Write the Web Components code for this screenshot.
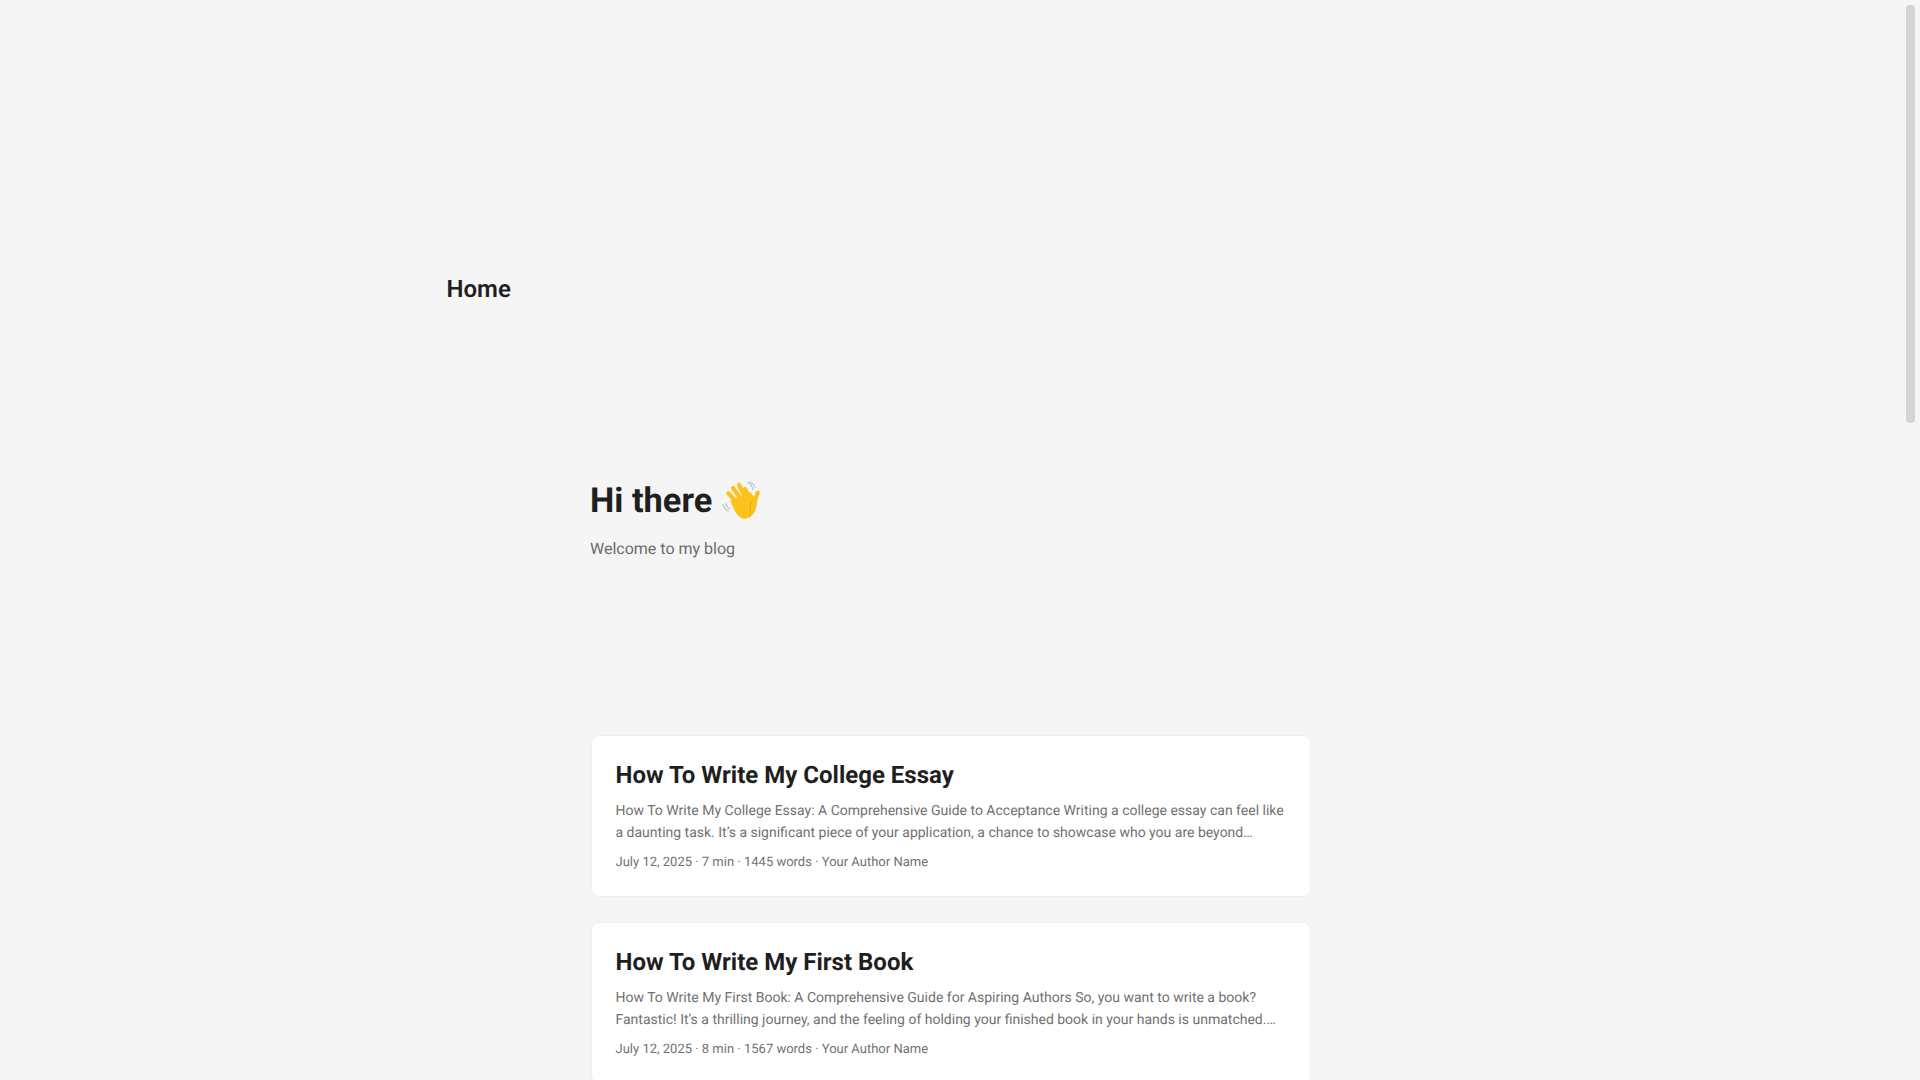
<!DOCTYPE html>
<html lang="en">
<head>
<meta charset="utf-8">
<title>Home</title>
<style>
  html, body { margin: 0; height: 1080px; overflow: hidden; background: #f5f5f5; }
  body { font-family: Roboto, "Liberation Sans", sans-serif; color: #1f1f1f; text-rendering: geometricPrecision; }
</style>
</head>
<body>
<blog-page>
  <site-header></site-header>
  <blog-hero title-text="Hi there" subtitle="Welcome to my blog"></blog-hero>
  <post-list>
    <post-card title="How To Write My College Essay" meta="July 12, 2025 · 7 min · 1445 words · Your Author Name">How To Write My College Essay: A Comprehensive Guide to Acceptance Writing a college essay can feel like a daunting task. It’s a significant piece of your application, a chance to showcase who you are beyond…</post-card>
    <post-card title="How To Write My First Book" meta="July 12, 2025 · 8 min · 1567 words · Your Author Name">How To Write My First Book: A Comprehensive Guide for Aspiring Authors So, you want to write a book? Fantastic! It’s a thrilling journey, and the feeling of holding your finished book in your hands is unmatched.…</post-card>
  </post-list>
</blog-page>
<page-scrollbar></page-scrollbar>

<script>
class BlogPage extends HTMLElement {
    constructor() {
        super();
        this.attachShadow({ mode: 'open' });
        this.shadowRoot.innerHTML = `
            <style>
                :host { display: block; width: 1902px; }
            </style>
            <slot></slot>
        `;
    }
}

class SiteHeader extends HTMLElement {
    constructor() {
        super();
        this.attachShadow({ mode: 'open' });
        this.shadowRoot.innerHTML = `
            <style>
                :host {
                    display: block;
                    width: 1009px;
                    margin: 0 auto;
                    padding-top: 271px;
                }
                a {
                    display: block;
                    font-size: 24px;
                    line-height: 36px;
                    font-weight: 600;
                    color: #1f1f1f;
                    text-decoration: none;
                }
            </style>
            <a href="#">Home</a>
        `;
    }
}

class BlogHero extends HTMLElement {
    constructor() {
        super();
        this.attachShadow({ mode: 'open' });
        this.shadowRoot.innerHTML = `
            <style>
                :host {
                    display: block;
                    width: 722px;
                    margin: 0 auto;
                    padding-top: 171px;
                }
                h1 {
                    margin: 0;
                    display: flex;
                    align-items: center;
                    gap: 9px;
                    font-size: 34.4px;
                    line-height: 46px;
                    font-weight: 700;
                    color: #1f1f1f;
                }
                svg { width: 40px; height: 40px; display: block; margin-top: -2px; }
                p {
                    margin: 13px 0 0;
                    font-size: 16px;
                    line-height: 24px;
                    color: #6b6b6b;
                }
            </style>
            <h1><span>${this.getAttribute('title-text')}</span>
                <svg viewBox="20 30 120 120" aria-hidden="true">
                    <g fill="none" stroke="#b7c4cb" stroke-width="3.5" stroke-linecap="round">
                        <path d="M100 37q13 6 16 22"/>
                        <path d="M108 36q10 5 14 16"/>
                        <path d="M26 103q3 13 16 20"/>
                        <path d="M34 101q2 9 11 15"/>
                    </g>
                    <g fill="none" stroke="#fcc21b" stroke-width="13" stroke-linecap="round">
                        <path d="M42 70 78 108"/>
                        <path d="M56 54 88 98"/>
                        <path d="M74 45 98 92"/>
                        <path d="M92 58 108 88"/>
                        <path d="M130 68 116 110"/>
                    </g>
                    <path d="M48 92 108 66 128 92C128 125 112 146 90 146 70 146 58 118 48 92Z" fill="#fcc21b"/>
                    <path d="M113 96q-10 14-5 26q3 6-2 14" fill="none" stroke="#e8a010" stroke-width="2.5" stroke-linecap="round"/>
                </svg>
            </h1>
            <p>${this.getAttribute('subtitle')}</p>
        `;
    }
}

class PostList extends HTMLElement {
    constructor() {
        super();
        this.attachShadow({ mode: 'open' });
        this.shadowRoot.innerHTML = `
            <style>
                :host {
                    display: flex;
                    flex-direction: column;
                    gap: 25px;
                    width: 720px;
                    margin: 0 auto;
                    padding-top: 174px;
                }
            </style>
            <slot></slot>
        `;
    }
}

class PostCard extends HTMLElement {
    constructor() {
        super();
        this.attachShadow({ mode: 'open' });
        this.shadowRoot.innerHTML = `
            <style>
                :host {
                    display: block;
                    box-sizing: border-box;
                    height: 162px;
                    padding: 23px 23.5px 0;
                    background: #fff;
                    border: 1px solid #efefef;
                    border-radius: 8px;
                }
                h2 {
                    margin: 0;
                    font-size: 24px;
                    line-height: 32px;
                    font-weight: 700;
                    color: #1f1f1f;
                }
                .excerpt {
                    margin: 9px 0 0;
                    font-size: 14px;
                    line-height: 22px;
                    color: #717171;
                }
                .meta {
                    margin-top: 9px;
                    font-size: 13px;
                    line-height: 20px;
                    color: #717171;
                }
            </style>
            <h2>${this.getAttribute('title')}</h2>
            <div class="excerpt"><slot></slot></div>
            <div class="meta">${this.getAttribute('meta')}</div>
        `;
    }
}

class PageScrollbar extends HTMLElement {
    constructor() {
        super();
        this.attachShadow({ mode: 'open' });
        this.shadowRoot.innerHTML = `
            <style>
                :host {
                    position: fixed;
                    top: 5px;
                    left: 1906px;
                    width: 9px;
                    height: 418px;
                    border-radius: 4px;
                    background: #d4d4d4;
                }
            </style>
        `;
    }
}

customElements.define('blog-page', BlogPage);
customElements.define('site-header', SiteHeader);
customElements.define('blog-hero', BlogHero);
customElements.define('post-list', PostList);
customElements.define('post-card', PostCard);
customElements.define('page-scrollbar', PageScrollbar);
</script>
</body>
</html>
